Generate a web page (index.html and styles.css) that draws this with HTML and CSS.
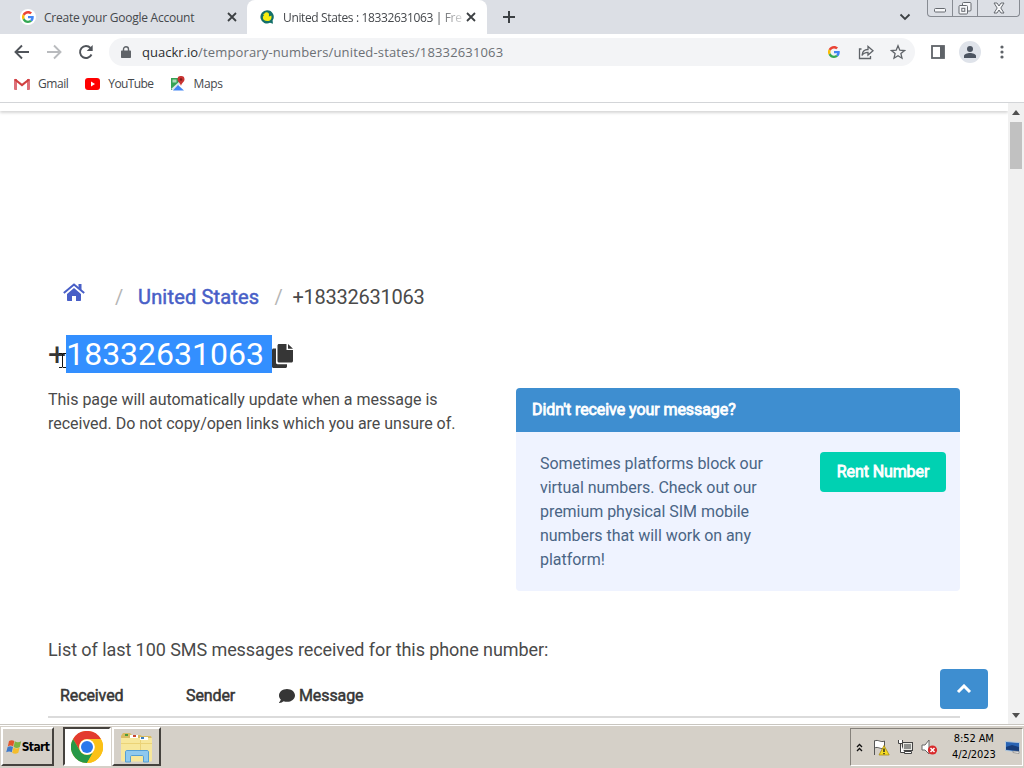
FILE: index.html
```html
<!DOCTYPE html>
<html lang="en">
<head>
  <meta charset="UTF-8">
  <meta name="viewport" content="width=device-width, initial-scale=1.0">
  <title>United States : 18332631063 | Free</title>
  <link rel="stylesheet" href="styles.css">
</head>
<body>
  <!-- Shared icons -->
  <svg class="defs" width="0" height="0">
    <symbol id="google" viewBox="0 0 48 48">
      <path fill="#ea4335" d="M24 9.500c3.500 0 6.700 1.200 9.200 3.600l6.900-6.900C35.900 2.400 30.500 0 24 0 14.600 0 6.500 5.400 2.600 13.200l8 6.200C12.400 13.700 17.700 9.500 24 9.500z"/>
      <path fill="#4285f4" d="M47 24.500c0-1.600-.2-3.100-.4-4.500H24v9h12.900c-.6 3-2.300 5.500-4.800 7.200l7.700 6C44.400 38 47 32 47 24.500z"/>
      <path fill="#fbbc05" d="M10.500 28.600a14.500 14.500 0 0 1 0-9.200l-8-6.200a24 24 0 0 0 0 21.600z"/>
      <path fill="#34a853" d="M24 48c6.500 0 11.900-2.100 15.900-5.800l-7.700-6c-2.200 1.500-4.900 2.300-8.200 2.300-6.300 0-11.600-4.200-13.500-9.900l-8 6.200C6.500 42.600 14.600 48 24 48z"/>
    </symbol>
  </svg>

  <!-- Browser tabs -->
  <div class="tab-strip">
    <div class="tab">
      <span class="tab-favicon"><svg width="12" height="12"><use href="#google"/></svg></span>
      <span class="tab-title title-account">Create your Google Account</span>
      <svg class="tab-close" width="10" height="10" viewBox="0 0 10 10"><path d="M1 1l8 8M9 1L1 9"/></svg>
    </div>
    <div class="tab active">
      <span class="tab-favicon">
        <svg width="14" height="14" viewBox="0 0 14 14">
          <path fill="#14706a" d="M7 .3a6.600 6.600 0 1 0 3 12.500l3 1-.4-3.200A6.600 6.600 0 0 0 7 .3z"/>
          <path fill="#f5ee10" d="M6.500 2.200a2.500 2.500 0 0 1 2.500 3l-.2 1c1 .2 2-.6 2.500-.8.800 3.200-.8 5.600-4 5.600-2.800 0-4.600-1.500-4.400-3.600 0-1 .6-1.600 1.200-2.100l-1.200-.6 1.300-.7c.3-1 1.200-1.800 2.300-1.800z"/>
        </svg>
      </span>
      <span class="tab-title title-number">United States : 18332631063 | Fre</span>
      <svg class="tab-close" width="10" height="10" viewBox="0 0 10 10"><path d="M1 1l8 8M9 1L1 9"/></svg>
    </div>
    <svg class="new-tab" width="12" height="12" viewBox="0 0 12 12"><path d="M6 0v12M0 6h12"/></svg>
    <svg class="tab-search" width="12" height="8" viewBox="0 0 12 8"><path d="M1.500 1.500L6 6l4.500-4.500"/></svg>
    <div class="window-buttons">
      <span class="win-btn"><svg width="12" height="16" viewBox="0 0 12 16"><rect x=".5" y="8.500" width="11" height="3.500" rx="1"/></svg></span>
      <span class="win-btn"><svg width="14" height="16" viewBox="0 0 14 16"><rect x="4.500" y="2.500" width="8.500" height="8.500" rx="1"/><rect x="1" y="5.500" width="8.500" height="8.500" rx="1"/><rect x="3.800" y="8.300" width="3" height="3"/></svg></span>
      <span class="win-btn win-close"><svg width="12" height="16" viewBox="0 0 12 16"><path d="M1 3h3l2 3 2-3h3L7.800 8l3.200 5H8l-2-3-2 3H1l3.200-5z"/></svg></span>
    </div>
  </div>

  <!-- Address bar -->
  <div class="toolbar">
    <svg class="nav-icon" width="16" height="16" viewBox="0 0 16 16"><path d="M15 8H2M8 1.500L1.500 8 8 14.500"/></svg>
    <svg class="nav-icon disabled" width="16" height="16" viewBox="0 0 16 16"><path d="M1 8h13M8 1.500L14.500 8 8 14.500"/></svg>
    <svg class="nav-icon" width="16" height="16" viewBox="0 0 16 16"><path d="M13.500 10.500A6 6 0 1 1 12.500 4"/><path class="solid" d="M14.700 1v6h-6z"/></svg>
    <div class="omnibox">
      <svg width="10" height="12" viewBox="0 0 10 12"><path fill="#5f6368" d="M1 4.500h8c.6 0 1 .4 1 1V11c0 .6-.4 1-1 1H1c-.6 0-1-.4-1-1V5.500c0-.6.4-1 1-1z"/><path fill="none" stroke="#5f6368" stroke-width="1.400" d="M2.500 5V3.200a2.500 2.500 0 0 1 5 0V5"/></svg>
      <span class="url"><b>quackr.io</b>/temporary-numbers/united-states/18332631063</span>
      <svg class="box-google" width="12" height="12"><use href="#google"/></svg>
      <svg class="box-share" width="16" height="16" viewBox="0 0 16 16"><path d="M3.500 5h-2v9.500h11V12M4 11.500c.3-4 2.500-6 6-6V2.500l5 4.300-5 4.200V8.300c-3 0-4.800 1-6 3.200z"/></svg>
      <svg class="box-star" width="16" height="16" viewBox="0 0 16 16"><path d="M8 1.800l1.800 4.400 4.700.4-3.600 3 1.100 4.600L8 11.700l-4 2.500 1.100-4.600-3.600-3 4.700-.4z"/></svg>
    </div>
    <svg class="side-panel" width="14" height="14" viewBox="0 0 14 14"><rect x="1" y="1" width="12" height="12" fill="#fff" stroke="#5f6368" stroke-width="1.800"/><path fill="#5f6368" d="M9 1h4v12H9z"/></svg>
    <span class="avatar"><svg width="14" height="14" viewBox="0 0 14 14"><circle cx="7" cy="4" r="3"/><path d="M1 13v-2c0-2 3.500-3 6-3s6 1 6 3v2z"/></svg></span>
    <svg class="menu-dots" width="4" height="14" viewBox="0 0 4 14"><circle cx="2" cy="2" r="1.600"/><circle cx="2" cy="7" r="1.600"/><circle cx="2" cy="12" r="1.600"/></svg>
  </div>

  <!-- Bookmarks -->
  <div class="bookmarks">
    <svg width="16" height="12" viewBox="0 0 16 12"><path fill="#d9606a" d="M0 1h3v11H1a1 1 0 0 1-1-1zM13 1h3v10a1 1 0 0 1-1 1h-2z" opacity=".9"/><path fill="none" stroke="#d13f3f" stroke-width="2.200" d="M1 1.500l7 5.500 7-5.500"/></svg>
    <span class="bm-gmail">Gmail</span>
    <svg width="15" height="12" viewBox="0 0 15 12"><rect width="15" height="12" rx="3" fill="#f00"/><path fill="#fff" d="M6 3.500v5L10 6z"/></svg>
    <span class="bm-youtube">YouTube</span>
    <svg width="15" height="15" viewBox="0 0 15 15"><path fill="#34a353" d="M1 2h8l2 4-9 8H1z"/><path fill="#dfe5ea" d="M1 13L11 4l2 1.500L4 14.500z"/><path fill="#4285f4" d="M8 9l6 5.500H3z"/><path fill="#fff" d="M2.500 3.500h4v3h-4z" opacity=".6"/><path fill="#c93431" d="M11 0a3.400 3.400 0 0 1 3.500 3.500C14.500 6 11.500 7 11 10c-.5-3-3.500-4-3.500-6.500A3.400 3.400 0 0 1 11 0z"/><circle cx="11" cy="3.500" r="1.200" fill="#7d1b1b"/></svg>
    <span class="bm-maps">Maps</span>
  </div>

  <!-- Page -->
  <div class="viewport">
    <main class="page">
      <div class="navbar-edge"></div>
      <nav class="breadcrumb">
        <svg class="home" width="22" height="18" viewBox="0 0 22 18"><path fill="none" stroke="#485fc7" stroke-width="2" d="M.8 10L11 1.500 21.200 10"/><path d="M15.500 1h3v6l-3-2.500zM11 5l7 6v6.200c0 .5-.3.800-.8.800H13v-5H9v5H4.800a.8.800 0 0 1-.8-.8V11z"/></svg>
        <span class="slash">/</span>
        <a class="country">United States</a>
        <span class="slash">/</span>
        <span class="crumb">+18332631063</span>
      </nav>
      <h1 class="number">+<span class="selected">18332631063 </span><svg width="21" height="24" viewBox="0 0 21 24"><path d="M7 0h7.500v6H21v11c0 .8-.7 1.500-1.500 1.500H7c-.8 0-1.500-.7-1.500-1.500V1.500C5.500.7 6.200 0 7 0zM16 0l5 4.700h-5z"/><path d="M4 4.500v14c0 1 .6 1.700 1.600 1.700H15v2.300c0 .8-.7 1.500-1.500 1.500h-12C.7 24 0 23.300 0 22.500V6c0-.8.7-1.500 1.500-1.500z"/></svg>
        <svg class="ibeam" width="9" height="17" viewBox="0 0 9 17"><path d="M1 1.500h3l.5.500.5-.5h3M4.500 2v13M1 15.500h3l.5-.5.5.5h3"/></svg>
      </h1>
      <div class="columns">
        <p class="intro">This page will automatically update when a message is<br>received. Do not copy/open links which you are unsure of.</p>
        <article class="message">
          <div class="message-header"><span>Didn't receive your message?</span></div>
          <div class="message-body">
            <p>Sometimes platforms block our<br>virtual numbers. Check out our<br>premium physical SIM mobile<br>numbers that will work on any<br>platform!</p>
            <button class="rent-button">Rent Number</button>
          </div>
        </article>
      </div>
      <p class="list-title">List of last 100 SMS messages received for this phone number:</p>
      <div class="table-head">
        <span class="col-received">Received</span>
        <span class="col-sender">Sender</span>
        <span class="col-message"><svg width="16" height="14" viewBox="0 0 16 14"><path d="M8 0c4.400 0 8 2.800 8 6.400s-3.600 6.400-8 6.400c-1.200 0-2.300-.2-3.300-.6C3.600 13 2 13.900.3 13.900c-.3 0-.4-.3-.2-.5.8-.9 1.500-2 1.700-3C.7 9.400 0 8 0 6.400 0 2.800 3.600 0 8 0z"/></svg>Message</span>
      </div>
      <button class="to-top"><svg width="16" height="10" viewBox="0 0 16 10"><path d="M2 8l6-6 6 6"/></svg></button>
    </main>
    <div class="scrollbar">
      <svg width="8" height="5" viewBox="0 0 8 5"><path d="M0 5l4-5 4 5z"/></svg>
      <div class="thumb"></div>
      <svg class="down" width="8" height="5" viewBox="0 0 8 5"><path d="M0 0l4 5 4-5z"/></svg>
    </div>
  </div>

  <!-- Taskbar -->
  <footer class="taskbar">
    <div class="task start">
      <svg width="16" height="16" viewBox="0 0 16 16"><path fill="#e2562b" d="M3 2C5 .7 6.800 1 8.300 2L7.200 7.500c-1.700-1.200-3.500-1.200-5.400 0z"/><path fill="#7db542" d="M8.800 2.300c1.900 1.200 4 1.200 6.400 0L13.800 8c-2 1.200-4.100 1.200-6.100 0z"/><path fill="#3e79c9" d="M1.600 8.100c1.900-1.200 3.700-1.200 5.400 0l-1.200 5.200c-1.700-1.200-3.600-1.200-5.600 0z"/><path fill="#f4bd2c" d="M7.500 8.600c2 1.200 4 1.200 6.100 0l-1.300 5.200c-2.200 1.400-4.200 1.200-6.100 0z"/></svg>
      <b>Start</b>
    </div>
    <div class="task chrome">
      <svg width="32" height="32" viewBox="0 0 32 32"><circle cx="16" cy="16" r="16" fill="#fbc116"/><path fill="#e33b2e" d="M2.100 8A16 16 0 0 1 29.900 8H16a8 8 0 0 0-6.900 12z"/><path fill="#279847" d="M2.100 8A16 16 0 0 0 16 32l6.900-12A8 8 0 0 1 9.100 20z"/><path fill="#fbc116" d="M29.900 8A16 16 0 0 1 16 32l6.900-12A8 8 0 0 0 16 8z"/><circle cx="16" cy="16" r="7.800" fill="#fff"/><circle cx="16" cy="16" r="6" fill="#2a78ec"/></svg>
    </div>
    <div class="task folder">
      <svg width="34" height="32" viewBox="0 0 34 32"><path fill="#d9bc62" d="M1 5l2-3h7l2 2h8l2 1h9l1 3v21H2z"/><path fill="#f7e79b" d="M1 7h31v22c0 1-.5 1.500-1.500 1.500h-28C1.500 30.500 1 30 1 29z"/><path fill="#fff" d="M10 4h8v3h-8zM20 6h8v3h-8z"/><path fill="#4d9a3d" d="M5 3h3v2H5z"/><path fill="#c9452e" d="M13 4h3v2h-3z"/><path fill="#3b7fc0" d="M21 6h3v2h-3z"/><path fill="#e6ca68" d="M1 12h31v1H1zM20 9h1v10h-1z" opacity=".7"/><path fill="#8fc9ee" stroke="#559fd4" d="M5.500 31V21c0-1 .5-1.500 1.500-1.500h20c1 0 1.500.5 1.500 1.500v10h-5v-5c0-1-.5-1.500-1.500-1.500H12c-1 0-1.500.5-1.500 1.500v5z"/></svg>
    </div>
    <div class="tray">
      <svg class="tray-more" width="7" height="9" viewBox="0 0 7 9"><path d="M1 4l2.500-2.500L6 4M1 8l2.500-2.500L6 8"/></svg>
      <svg width="17" height="17" viewBox="0 0 17 17"><path fill="#fff" stroke="#555" d="M1.500 16V1.500M1.500 2c4-2 6 2 10 0v7c-4 2-6-2-10 0z"/><path fill="#f6dc22" stroke="#a98c13" stroke-width=".8" d="M11 6.500l5.200 9.500H6z"/><path stroke="#222" stroke-width="1.400" d="M11 9.500v3.500M11 14v1.200"/></svg>
      <svg width="17" height="16" viewBox="0 0 17 16"><rect x="5.500" y="3.500" width="10" height="8" fill="#8d8f8d" stroke="#444"/><rect x="6.500" y="4.500" width="8" height="6" fill="none" stroke="#e9e9e4"/><path fill="#fff" stroke="#444" d="M7.500 14.500h7v-2h-7zM1.500 1v3.500h4V1M3.500 4.500v9h4"/></svg>
      <svg width="17" height="17" viewBox="0 0 17 17"><path fill="#fff" stroke="#666" d="M1 6h3l4-5v14l-4-4H1z"/><circle cx="11.500" cy="11" r="4.600" fill="#d8292b"/><path stroke="#fff" stroke-width="1.500" d="M9.500 9l4 4M13.500 9l-4 4"/></svg>
      <div class="clock"><span>8:52 AM</span><span>4/2/2023</span></div>
      <svg width="15" height="14" viewBox="0 0 15 14"><path fill="#2863b4" stroke="#b8cadb" d="M.5 1.500l14 1V12l-14-1.500z"/><path fill="#173c79" d="M1 7l6-2 7 2v4L1 9.500z"/><path fill="#eee" stroke="#777" stroke-width=".6" d="M8 11l6 .5V13.500l-6-1z"/></svg>
    </div>
  </footer>
</body>
</html>
```

FILE: styles.css
```css
:root {
  --blue: #3e8ed0;
  --green: #00d1b2;
  --text: #4a4a4a;
  --dark: #363636;
  --chrome-gray: #5f6368;
  --ui-font: 'Open Sans', 'Noto Sans', sans-serif;
}

/* General Reset */
* {
  margin: 0;
  padding: 0;
  box-sizing: border-box;
}

body {
  width: 1024px;
  height: 768px;
  display: flex;
  flex-direction: column;
  overflow: hidden;
  background: #fff;
  font-family: Roboto, sans-serif;
  color: var(--text);
}

svg {
  display: block;
  flex-shrink: 0;
}

.defs {
  position: absolute;
}

/* Tabs */
.tab-strip {
  height: 34px;
  display: flex;
  background: #dcdfe5;
  font-family: var(--ui-font);
  font-size: 12px;
  color: #45484c;
  flex-shrink: 0;
}

.tab {
  width: 247px;
  display: flex;
  align-items: center;
  padding: 0 10px 0 20px;
}

.tab.active {
  width: 240px;
  padding: 0 11px 0 12px;
  background: #fff;
  border-radius: 8px 8px 0 0;
}

.tab-favicon {
  width: 16px;
  height: 16px;
  display: flex;
  flex-shrink: 0;
  align-items: center;
  justify-content: center;
  border-radius: 50%;
  background: #fff;
}

.tab-title {
  flex: 1;
  min-width: 0;
  margin-left: 8px;
  white-space: nowrap;
}

.title-account {
  letter-spacing: -0.24px;
}

.title-number {
  letter-spacing: -0.36px;
  margin-right: 3px;
  -webkit-mask-image: linear-gradient(to right, #000 86%, rgba(0, 0, 0, 0.15));
}

.tab-close {
  fill: none;
  stroke: #3c4043;
  stroke-width: 1.8;
}

.new-tab {
  margin: 11px 0 0 16px;
  stroke: #3c4043;
  stroke-width: 2;
}

.tab-search {
  margin: 13px 16px 0 auto;
  fill: none;
  stroke: #3c4043;
  stroke-width: 1.8;
}

.window-buttons {
  display: flex;
  width: 93px;
  height: 17px;
  margin-right: 4px;
  border: 1px solid #878b92;
  border-top: none;
  border-radius: 0 0 4px 4px;
}

.win-btn {
  width: 25px;
  display: flex;
  justify-content: center;
  border-right: 1px solid #878b92;
}

.win-btn svg {
  fill: #f7f8fa;
  stroke: #666a70;
}

.win-close {
  width: 41px;
  border-right: none;
}

/* Toolbar */
.toolbar {
  height: 36px;
  display: flex;
  align-items: center;
  padding: 0 20px 0 14px;
  flex-shrink: 0;
}

.nav-icon {
  margin-right: 16px;
  fill: none;
  stroke: #50545a;
  stroke-width: 1.9;
}

.nav-icon.disabled {
  stroke: #b9bbbe;
}

.nav-icon .solid {
  fill: #50545a;
  stroke: none;
}

.omnibox {
  width: 806px;
  height: 28px;
  margin-left: -1px;
  padding: 0 9px 0 12px;
  display: flex;
  align-items: center;
  border-radius: 14px;
  background: #f3f4f6;
}

.url {
  flex: 1;
  margin-left: 11px;
  font-family: var(--ui-font);
  font-size: 13px;
  letter-spacing: 0.15px;
  color: #6c7075;
}

.url b {
  font-weight: 400;
  letter-spacing: 0;
  color: #2b2d30;
}

.box-google {
  margin-right: 18px;
}

.box-share,
.box-star {
  fill: none;
  stroke: var(--chrome-gray);
  stroke-width: 1.3;
}

.box-share {
  margin-right: 16px;
}

.side-panel {
  margin-left: 16px;
}

.avatar {
  width: 22px;
  height: 22px;
  margin-left: 14px;
  display: flex;
  align-items: center;
  justify-content: center;
  border-radius: 50%;
  background: #dfe3ea;
  fill: #4d5562;
}

.menu-dots {
  margin-left: auto;
  fill: var(--chrome-gray);
}

/* Bookmarks */
.bookmarks {
  height: 33px;
  display: flex;
  align-items: center;
  padding: 0 14px 5px;
  border-bottom: 1px solid #d3d5d8;
  font-family: var(--ui-font);
  font-size: 12px;
  color: #45484c;
  flex-shrink: 0;
}

.bookmarks span {
  margin: 0 17px 0 8px;
}

.bookmarks .bm-gmail {
  letter-spacing: -0.45px;
}

.bookmarks .bm-youtube {
  letter-spacing: -0.6px;
}

.bookmarks .bm-maps {
  letter-spacing: -0.3px;
}

/* Page */
.viewport {
  height: 621px;
  display: flex;
  flex-shrink: 0;
}

.page {
  position: relative;
  width: 1008px;
  padding: 0 48px;
  overflow: hidden;
}

.navbar-edge {
  height: 8px;
  margin: 0 -48px;
  box-shadow: 0 2px 3px rgba(0, 0, 0, 0.16);
}

.breadcrumb {
  display: flex;
  align-items: center;
  height: 30px;
  margin-top: 171px;
  padding-left: 15px;
  font-size: 20px;
}

.home {
  margin: -10px 30px 0 0;
  fill: #485fc7;
}

.slash {
  width: 7px;
  color: #b5b5b5;
}

.country {
  margin: 0 15px 0 16px;
  color: #485fc7;
  letter-spacing: 0.18px;
  -webkit-text-stroke: 0.5px #485fc7;
}

.crumb {
  margin-left: 11px;
  letter-spacing: -0.24px;
  color: var(--text);
}

.number {
  position: relative;
  display: flex;
  align-items: center;
  height: 38px;
  margin-top: 23px;
  font-size: 32px;
  line-height: 38px;
  font-weight: 400;
  color: var(--dark);
  fill: var(--dark);
}

.selected {
  white-space: pre;
  background: #338fff;
  color: #fff;
}

.number svg {
  margin-top: 3px;
}

.number .ibeam {
  position: absolute;
  left: 10px;
  top: 14px;
  fill: none;
  stroke: #111;
}

.columns {
  display: flex;
  justify-content: space-between;
  margin-top: 15px;
  font-size: 16px;
  line-height: 24px;
}

.intro {
  white-space: nowrap;
  letter-spacing: -0.02px;
}

.message {
  width: 444px;
  height: 203px;
  border-radius: 4px;
  background: #eff3ff;
  overflow: hidden;
}

.message-header {
  height: 44px;
  padding: 10px 16px;
  background: var(--blue);
  color: #fff;
}

.message-header span {
  letter-spacing: -0.07px;
  -webkit-text-stroke: 0.8px #fff;
}

.message-body {
  display: flex;
  justify-content: space-between;
  align-items: flex-start;
  padding: 20px 14px 0 24px;
  color: #4a6585;
}

.message-body p {
  letter-spacing: -0.04px;
  white-space: nowrap;
}

.rent-button {
  width: 126px;
  height: 40px;
  padding-bottom: 1px;
  border: none;
  border-radius: 4px;
  background: var(--green);
  color: #fff;
  font-family: inherit;
  font-size: 16px;
  letter-spacing: -0.1px;
  -webkit-text-stroke: 0.8px #fff;
}

.list-title {
  margin-top: 45px;
  font-size: 18px;
  line-height: 27px;
  letter-spacing: -0.07px;
}

.table-head {
  display: flex;
  height: 43px;
  margin-top: 12px;
  padding: 9px 12px;
  border-bottom: 2px solid #dbdbdb;
  font-size: 16px;
  line-height: 24px;
  letter-spacing: -0.1px;
  color: var(--dark);
  fill: var(--dark);
  -webkit-text-stroke: 0.5px var(--dark);
}

.table-head svg {
  margin-right: 4px;
  stroke: none;
}

.col-received {
  width: 126px;
}

.col-sender {
  width: 93px;
}

.col-message {
  display: flex;
  align-items: center;
}

.to-top {
  position: absolute;
  right: 20px;
  bottom: 15px;
  width: 48px;
  height: 40px;
  display: flex;
  align-items: center;
  justify-content: center;
  border: none;
  border-radius: 4px;
  background: var(--blue);
}

.to-top path {
  fill: none;
  stroke: #fff;
  stroke-width: 3;
}

/* Scrollbar */
.scrollbar {
  width: 16px;
  display: flex;
  flex-direction: column;
  align-items: center;
  padding: 7px 0 6px;
  background: #f1f1f1;
  fill: #505050;
}

.thumb {
  width: 12px;
  height: 47px;
  margin-top: 7px;
  background: #c1c1c1;
}

.scrollbar .down {
  margin-top: auto;
}

/* Taskbar */
.taskbar {
  height: 44px;
  display: flex;
  padding: 2px 0 0 1px;
  border-top: 1px solid #c9c6c0;
  box-shadow: inset 0 1px #fff;
  background: #d5d0c8;
  font-family: 'DejaVu Sans Condensed', 'DejaVu Sans', sans-serif;
  color: #000;
  flex-shrink: 0;
}

.task {
  height: 39px;
  display: flex;
  align-items: center;
  justify-content: center;
  border: 2px solid;
  border-color: #fff #45423e #45423e #fff;
}

.start {
  width: 53px;
  font-size: 12px;
  letter-spacing: -0.6px;
}

.chrome {
  width: 48px;
  margin-left: 9px;
  border-color: #45423e #fff #fff #45423e;
  background: #fff;
}

.folder {
  width: 49px;
  margin-left: 1px;
}

.tray {
  display: flex;
  align-items: center;
  width: 173px;
  height: 38px;
  margin-top: 1px;
  margin-left: auto;
  margin-right: 1px;
  padding-left: 5px;
  border: 1px solid;
  border-color: #85817b #fff #fff #85817b;
}

.tray > svg {
  margin-right: 7px;
}

.tray .tray-more {
  margin-right: 10px;
  fill: none;
  stroke: #111;
  stroke-width: 1.3;
}

.clock {
  width: 46px;
  display: flex;
  flex-direction: column;
  align-items: center;
  margin: 0 9px 0 7px;
  font-size: 11px;
  line-height: 16px;
  letter-spacing: -0.1px;
  white-space: nowrap;
}
```
